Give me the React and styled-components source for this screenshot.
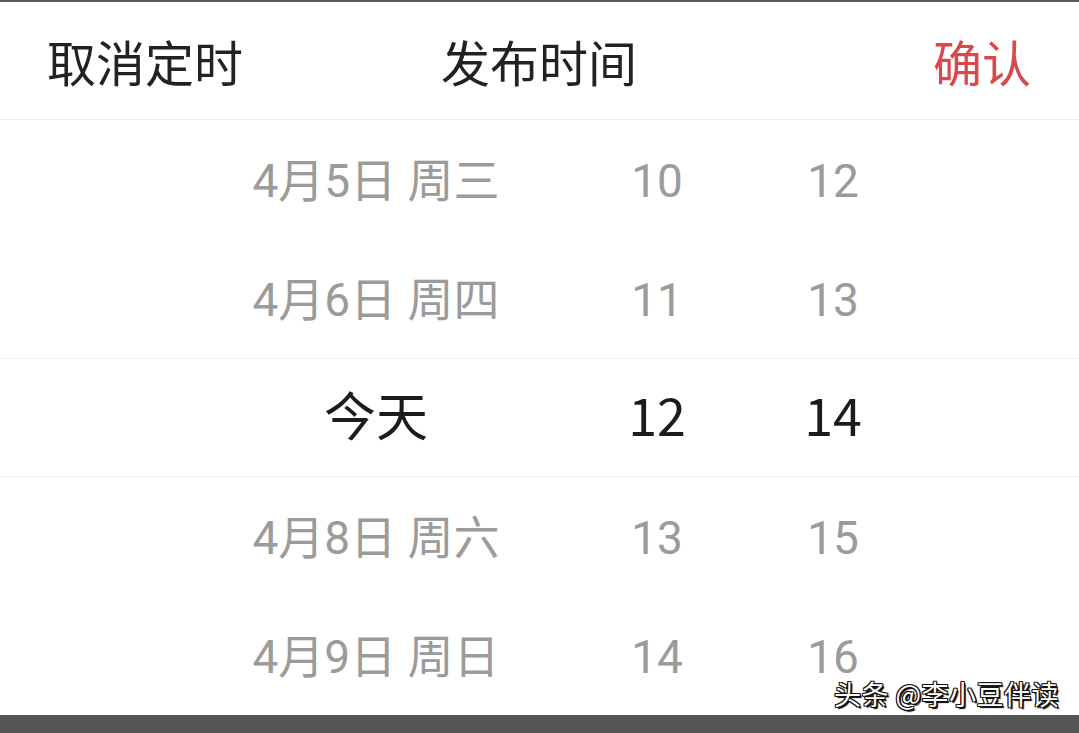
import React from 'react';
import styled, { createGlobalStyle } from 'styled-components';

const GlobalStyle = createGlobalStyle`
  html, body {
    margin: 0;
    padding: 0;
    background: #fff;
  }
  body {
    font-family: "Noto Sans CJK SC", "Noto Sans", sans-serif;
  }
`;

const Screen = styled.div`
  position: relative;
  width: 1079px;
  height: 733px;
  overflow: hidden;
  background: #fff;
  border-top: 2px solid #5a5a5a;
  box-sizing: border-box;
  display: flex;
  flex-direction: column;
`;

const Header = styled.div`
  height: 118px;
  flex-shrink: 0;
  display: grid;
  grid-template-columns: 1fr auto 1fr;
  align-items: center;
  padding: 0 48px 0 47px;
  box-sizing: border-box;
  border-bottom: 1px solid #ececec;
  font-size: 49px;
  color: #222;
`;

const Action = styled.div`
  justify-self: ${(p) => (p.right ? 'end' : 'start')};
  color: ${(p) => (p.danger ? '#d9484b' : '#222')};
`;

const Title = styled.div``;

const Wheel = styled.div`
  flex: 1;
  display: flex;
  flex-direction: column;
`;

const Row = styled.div`
  height: 119px;
  flex-shrink: 0;
  display: grid;
  grid-template-columns: 300px 262px 90px;
  padding-left: 226px;
  padding-top: ${(p) => (p.active ? '0' : '2px')};
  padding-bottom: ${(p) => (p.active ? '8px' : '0')};
  align-items: center;
  font-family: ${(p) =>
    p.active
      ? '"Noto Sans CJK SC", sans-serif'
      : 'Roboto, "Noto Sans CJK SC", sans-serif'};
  font-size: ${(p) => (p.active ? '52px' : '46px')};
  color: ${(p) => (p.active ? '#1c1c1c' : '#9b9b9b')};
  border-top: ${(p) => (p.active ? '1px solid #f0f0f0' : 'none')};
  border-bottom: ${(p) => (p.active ? '1px solid #f0f0f0' : 'none')};
  box-sizing: border-box;
`;

const Cell = styled.div`
  text-align: center;
  white-space: pre;
  line-height: 1;
`;

const BottomBar = styled.div`
  height: 18px;
  flex-shrink: 0;
  margin-top: auto;
  background: #555;
`;

const Watermark = styled.div`
  position: absolute;
  right: 20px;
  bottom: 20px;
  font-size: 27px;
  color: #fff;
  letter-spacing: 0.5px;
  text-shadow:
    -1px -1px 0 #111, 1px -1px 0 #111, -1px 1px 0 #111, 1px 1px 0 #111,
    1px 0 0 #111, -1px 0 0 #111, 2px 2px 1px #000;
`;

const rows = [
  { date: '4月5日 周三', hour: '10', minute: '12' },
  { date: '4月6日 周四', hour: '11', minute: '13' },
  { date: '今天', hour: '12', minute: '14', active: true },
  { date: '4月8日 周六', hour: '13', minute: '15' },
  { date: '4月9日 周日', hour: '14', minute: '16' },
];

export default function App() {
  return (
    <>
      <GlobalStyle />
      <Screen>
        <Header>
          <Action>取消定时</Action>
          <Title>发布时间</Title>
          <Action right danger>确认</Action>
        </Header>
        <Wheel>
          {rows.map((r) => (
            <Row key={r.date} active={r.active}>
              <Cell>{r.date}</Cell>
              <Cell>{r.hour}</Cell>
              <Cell>{r.minute}</Cell>
            </Row>
          ))}
        </Wheel>
        <BottomBar />
        <Watermark>头条 @李小豆伴读</Watermark>
      </Screen>
    </>
  );
}
